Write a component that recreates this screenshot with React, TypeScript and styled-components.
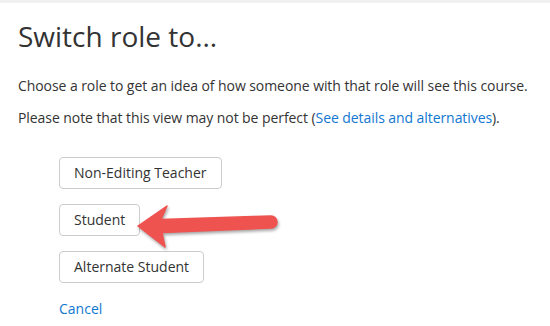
import { createGlobalStyle, styled } from 'styled-components';

const GlobalStyle = createGlobalStyle`
  body {
    margin: 0;
    background: #fff;
    font-family: 'Open Sans', 'Liberation Sans', sans-serif;
    color: #333;
  }
`;

const TopBar = styled.div`
  height: 3px;
  background: #f1f1f1;
`;

const Page = styled.div`
  position: relative;
  padding: 16px 0 0 18px;
`;

const Heading = styled.h2`
  margin: 0 0 23px;
  font-size: 28px;
  line-height: 34px;
  font-weight: 400;
  color: #333;
`;

const Text = styled.p`
  margin: 0 0 12px;
  font-size: 14px;
  line-height: 20px;
  letter-spacing: -0.07px;
`;

const Link = styled.a`
  color: #1177d1;
  text-decoration: none;
`;

const RoleList = styled.div`
  display: flex;
  flex-direction: column;
  align-items: flex-start;
  gap: 15px;
  margin: 29px 0 0 41px;
`;

const RoleButton = styled.button`
  height: 32px;
  padding: 0 14px;
  border: 1px solid #ccc;
  border-radius: 4px;
  background: #fff;
  color: #333;
  font-family: inherit;
  font-size: 14px;
  line-height: 20px;
`;

const Cancel = styled(Link)`
  margin-top: 1px;
  font-size: 14px;
  line-height: 20px;
`;

const Arrow = styled.svg`
  position: absolute;
  left: 130px;
  top: 195px;
  pointer-events: none;
  filter: drop-shadow(1px 2px 1.5px rgba(0, 0, 0, 0.35));
`;

const roles = ['Non-Editing Teacher', 'Student', 'Alternate Student'];

const App = () => (
  <>
    <GlobalStyle />
    <TopBar />
    <Page>
      <Heading>Switch role to...</Heading>
      <Text>Choose a role to get an idea of how someone with that role will see this course.</Text>
      <Text>
        Please note that this view may not be perfect (<Link href="#">See details and alternatives</Link>).
      </Text>
      <RoleList>
        {roles.map((role) => (
          <RoleButton key={role}>{role}</RoleButton>
        ))}
        <Cancel href="#">Cancel</Cancel>
      </RoleList>
      <Arrow width="155" height="60" viewBox="0 0 155 60">
        <path
          d="M8 28 L37 8 L31 21.5 L141 18 A6 6 0 0 1 141 30 L32 34.5 L35 49 Z"
          fill="#ef5350"
          stroke="#ef5350"
          strokeWidth="1.5"
          strokeLinejoin="round"
        />
      </Arrow>
    </Page>
  </>
);

export default App;
